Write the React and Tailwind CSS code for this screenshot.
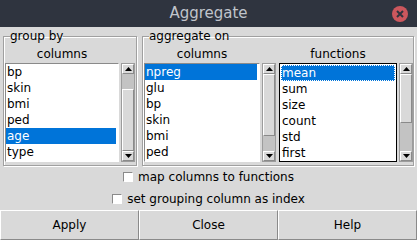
import React from "react";

const groupCols = ["bp", "skin", "bmi", "ped", "age", "type"];
const aggCols = ["npreg", "glu", "bp", "skin", "bmi", "ped"];
const funcs = ["mean", "sum", "size", "count", "std", "first"];

function Arrow({ up }) {
  return (
    <div className="h-[10px] flex items-center justify-center bg-[#d9d9d9] border border-t-white border-l-white border-r-[#8a8a8a] border-b-[#8a8a8a]">
      <svg width="7" height="4" viewBox="0 0 7 4">
        {up ? <path d="M0 4 L3.5 0 L7 4 Z" fill="#000" /> : <path d="M0 0 L3.5 4 L7 0 Z" fill="#000" />}
      </svg>
    </div>
  );
}

function Scrollbar({ top, size }) {
  // offset and length of the thumb inside the trough, px
  return (
    <div className="w-[14px] flex flex-col bg-[#c3c3c3] border border-[#9c9c9c]">
      <Arrow up />
      <div className="flex-1 flex flex-col">
        <div style={{ height: top }} />
        <div
          className="bg-[#d9d9d9] border border-t-white border-l-white border-r-[#8a8a8a] border-b-[#8a8a8a]"
          style={{ height: size }}
        />
      </div>
      <Arrow />
    </div>
  );
}

function Listbox({ items, selected, focused, width, scroll }) {
  return (
    <div className="flex gap-[2px]">
      <div
        className={
          "h-[99px] bg-white overflow-hidden " +
          (focused ? "border border-black p-[1px]" : "border border-t-[#8a8a8a] border-l-[#8a8a8a] border-r-white border-b-white pr-[2px]")
        }
        style={{ width }}
      >
        {items.map((it, i) => (
          <div
            key={it}
            className={
              "h-[16px] leading-[16px] pl-[1px] " +
              (i === selected ? "bg-[#0074d9] text-white " : "text-black ") +
              (i === selected && focused ? "outline outline-1 outline-dotted outline-white -outline-offset-1" : "")
            }
          >
            {it}
          </div>
        ))}
      </div>
      <Scrollbar top={scroll[0]} size={scroll[1]} />
    </div>
  );
}

function Check({ label, className }) {
  return (
    <div className={"flex items-center gap-[5px] " + className}>
      <div className="w-[10px] h-[10px] bg-white border border-t-[#8a8a8a] border-l-[#8a8a8a] border-r-white border-b-white" />
      <span>{label}</span>
    </div>
  );
}

function Btn({ children }) {
  return (
    <button className="flex-1 h-[30px] bg-[#d9d9d9] border border-t-white border-l-white border-r-[#8a8a8a] border-b-[#8a8a8a] text-black">
      {children}
    </button>
  );
}

export default function App() {
  return (
    <div className="w-[417px] h-[240px] bg-[#d9d9d9] flex flex-col text-[12px] font-['DejaVu_Sans',sans-serif] text-black">
      {/* title bar */}
      <div className="relative h-[27px] bg-[#2f343f] flex items-center justify-center text-[15px] text-[#c0c4cb]">
        Aggregate
        <div className="absolute right-[9px] top-[6px] w-[16px] h-[16px] rounded-full bg-[#cc575d] flex items-center justify-center">
          <svg width="8" height="8" viewBox="0 0 8 8">
            <path d="M1 1 L7 7 M7 1 L1 7" stroke="#2f343f" strokeWidth="2" />
          </svg>
        </div>
      </div>

      <div className="flex gap-[5px] px-[3px] pt-[2px]">
        <fieldset className="border border-[#a0a0a0] shadow-[inset_1px_1px_0_#fff,1px_1px_0_#fff] px-[1px] pb-[3px] w-[135px]">
          <legend className="ml-[5px] px-0 leading-[14px]">group by</legend>
          <div className="text-center leading-[14px] mt-[4px] mb-[2px] pr-[16px]">columns</div>
          <Listbox items={groupCols} selected={4} width={114} scroll={[15, 62]} />
        </fieldset>

        <fieldset className="border border-[#a0a0a0] shadow-[inset_1px_1px_0_#fff,1px_1px_0_#fff] pl-[1px] pb-[3px] flex-1">
          <legend className="ml-[5px] px-0 leading-[14px]">aggregate on</legend>
          <div className="flex gap-[3px]">
            <div className="flex flex-col">
              <div className="text-center leading-[14px] mt-[4px] mb-[2px] pr-[16px]">columns</div>
              <Listbox items={aggCols} selected={0} width={116} scroll={[0, 62]} />
            </div>
            <div className="flex flex-col">
              <div className="text-center leading-[14px] mt-[4px] mb-[2px] pr-[16px]">functions</div>
              <Listbox items={funcs} selected={0} focused width={118} scroll={[0, 49]} />
            </div>
          </div>
        </fieldset>
      </div>

      <div className="flex flex-col items-center">
        <Check label="map columns to functions" className="h-[21px]" />
        <Check label="set grouping column as index" className="h-[23px]" />
      </div>

      <div className="flex mt-auto">
        <Btn>Apply</Btn>
        <Btn>Close</Btn>
        <Btn>Help</Btn>
      </div>
    </div>
  );
}
